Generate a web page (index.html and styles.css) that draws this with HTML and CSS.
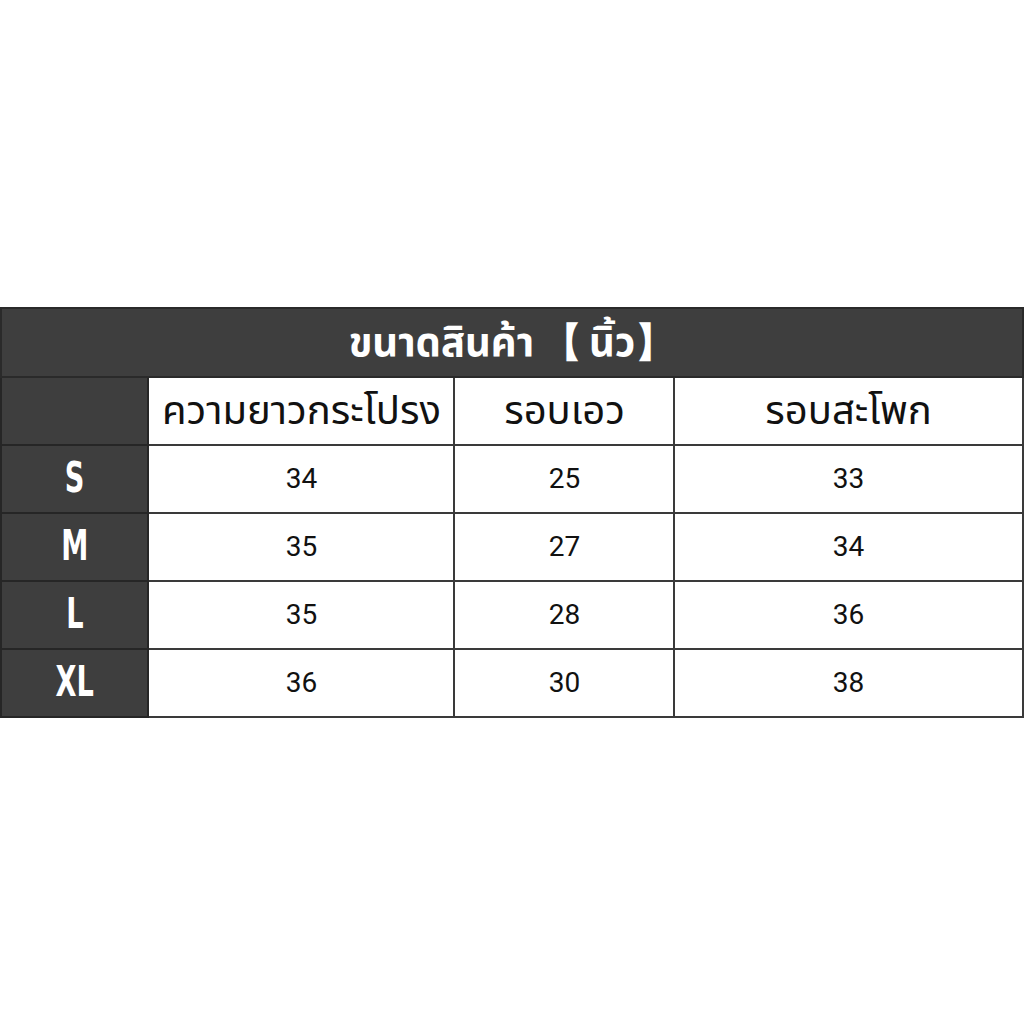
FILE: index.html
```html
<!DOCTYPE html>
<html lang="th">
<head>
<meta charset="utf-8">
<title>ขนาดสินค้า</title>
<link rel="stylesheet" href="styles.css">
</head>
<body>
<table class="size-table">
  <colgroup>
    <col class="c-size">
    <col class="c-len">
    <col class="c-waist">
    <col class="c-hip">
  </colgroup>
  <tr class="title-row">
    <th colspan="4">ขนาดสินค้า 【 นิ้ว】</th>
  </tr>
  <tr class="head-row">
    <th class="dark"></th>
    <th>ความยาวกระโปรง</th>
    <th>รอบเอว</th>
    <th>รอบสะโพก</th>
  </tr>
  <tr>
    <th class="dark"><span class="sz">S</span></th>
    <td>34</td><td>25</td><td>33</td>
  </tr>
  <tr>
    <th class="dark"><span class="sz">M</span></th>
    <td>35</td><td>27</td><td>34</td>
  </tr>
  <tr>
    <th class="dark"><span class="sz">L</span></th>
    <td>35</td><td>28</td><td>36</td>
  </tr>
  <tr>
    <th class="dark"><span class="sz">XL</span></th>
    <td>36</td><td>30</td><td>38</td>
  </tr>
</table>
</body>
</html>
```

FILE: styles.css
```css
html, body {
  margin: 0;
  padding: 0;
  background: #ffffff;
}
body {
  width: 1024px;
  height: 1024px;
  display: flex;
  align-items: center;
  justify-content: center;
}
.size-table {
  border-collapse: collapse;
  width: 1021px;
  table-layout: fixed;
  border: 2px solid #2e2e2e;
  font-family: "Noto Sans Thai", "Noto Sans", "DejaVu Sans", sans-serif;
}
.c-size { width: 147px; }
.c-len { width: 306px; }
.c-waist { width: 220px; }
.c-hip { width: 348px; }

.size-table th,
.size-table td {
  border: 2px solid #3a3a3a;
  text-align: center;
  vertical-align: middle;
  padding: 0;
  height: 66px;
  line-height: 40px;
  color: #111;
}
.title-row th {
  background: #3e3e3e;
  color: #ffffff;
  font-weight: 700;
  font-size: 40px;
  height: 63px;
  padding-top: 4px;
  word-spacing: -3px;
  border-color: #2a2a2a;
}
.head-row th {
  font-weight: 400;
  font-size: 40px;
  height: 63px;
  padding-top: 3px;
  color: #111;
}
.size-table .dark {
  background: #3e3e3e;
  border-color: #262626;
  color: #ffffff;
}
.size-table td {
  font-family: Roboto, "Liberation Sans", sans-serif;
  font-size: 28px;
  font-weight: 400;
}
.sz {
  display: inline-block;
  font-family: "DejaVu Sans Condensed", "DejaVu Sans", sans-serif;
  font-weight: 700;
  font-size: 42px;
  line-height: 40px;
  margin-top: 8px;
  transform: scaleX(0.72);
  color: #ffffff;
}
```
